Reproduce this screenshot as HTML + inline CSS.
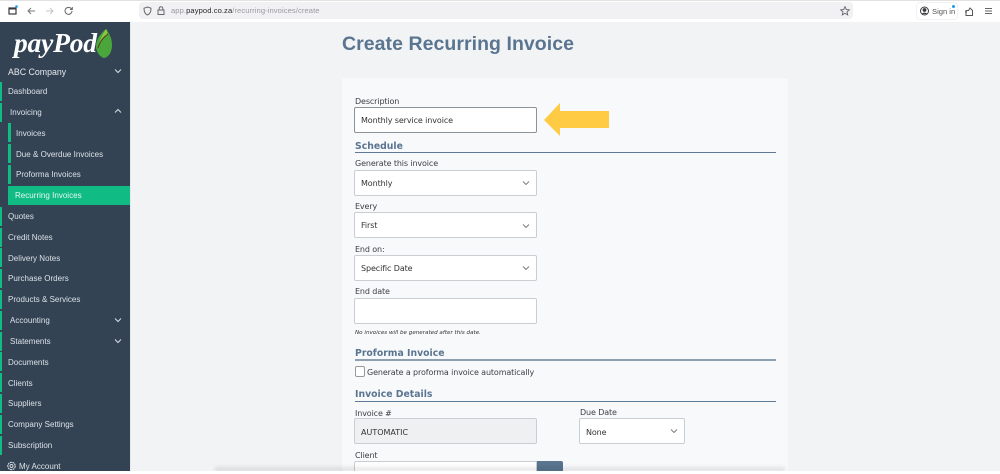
<!DOCTYPE html>
<html><head><meta charset="utf-8"><style>
html,body{margin:0;padding:0;width:1000px;height:474px;overflow:hidden;background:#f2f3f5}
body{font-family:"DejaVu Sans","Liberation Sans",sans-serif;font-size:8px;color:#333;position:relative}
.a{position:absolute;white-space:nowrap}
.s{color:#dbe1e6;line-height:12px;height:12px;font-family:"Liberation Sans",sans-serif;font-size:8px;letter-spacing:.02px;transform:translateY(1px)}
.bar{position:absolute;left:0;width:2px;height:19px;background:#10bc83}
.sb{position:absolute;left:8px;width:2.5px;height:19px;background:#10bc83}
.lab{position:absolute;color:#3a3f44;line-height:12px;white-space:nowrap;letter-spacing:-.12px;transform:translateY(1px)}
.inp{position:absolute;box-sizing:border-box;background:#fff;border:1px solid #c9ced3;border-radius:2px;height:26px;line-height:26px;padding-left:6px;color:#333;width:183px;left:354px;letter-spacing:-.1px}
.h{position:absolute;left:355px;color:#5a7590;font-weight:bold;font-size:9.300px;line-height:14px;white-space:nowrap;transform:translateY(1px)}
.hr{position:absolute;left:355px;width:421px;height:1px;background:#5e7a96}
svg{position:absolute;overflow:visible}
</style></head><body>
<div class="a" style="left:0;top:0;width:1000px;height:22px;background:#fff"></div>
<div class="a" style="left:0;top:0;width:1000px;height:1px;background:#e4e2e0"></div>
<svg style="left:8px;top:5px" width="10" height="10" fill="none" stroke="#3a3a3e" stroke-width="1.2"><rect x="1" y="3" width="7" height="6"/><path d="M1 3.500h7" stroke-width="2"/><circle cx="8.500" cy="1.500" r="1.300" fill="#1a9cf0" stroke="none"/></svg>
<svg style="left:27px;top:6px" width="10" height="10" fill="none" stroke="#77777c" stroke-width="1"><path d="M8 5H1M4 2L1 5l3 3"/></svg>
<svg style="left:45px;top:6px" width="10" height="10" fill="none" stroke="#c5c5c8" stroke-width="1"><path d="M1 5h7M5 2l3 3-3 3"/></svg>
<svg style="left:64px;top:6px" width="10" height="10" fill="none" stroke="#66666a" stroke-width="1"><path d="M8 5a3.500 3.500 0 1 1-1-2.600L8.300 3.500M8.300 1v2.500H6"/></svg>
<div class="a" style="left:139px;top:2px;width:714px;height:17px;background:#f1f1f3;border-radius:4px"></div>
<svg style="left:143px;top:6px" width="10" height="10" fill="none" stroke="#66666a" stroke-width="1"><path d="M4.500 1L8 2.200C8 5.500 7 8 4.500 9 2 8 1 5.500 1 2.200z"/></svg>
<svg style="left:157px;top:6px" width="8" height="10" fill="none" stroke="#66666a" stroke-width="1"><rect x="1" y="4" width="6" height="4.500"/><path d="M2.200 4V2.500a1.800 1.800 0 0 1 3.600 0V4"/></svg>
<div class="a" style="left:171px;top:5px;font-size:7.600px;line-height:12px;color:#9a9aa0;font-family:'Liberation Sans',sans-serif;letter-spacing:.08px">app.<span style="color:#2a2a2e">paypod.co.za</span>/recurring-invoices/create</div>
<svg style="left:840px;top:6px" width="10" height="10" fill="none" stroke="#66666a" stroke-width=".9"><path d="M5 .7l1.300 2.900 3 .3-2.300 2 .7 3L5 7.300 2.300 8.900l.7-3-2.300-2 3-.3z"/></svg>
<div class="a" style="left:916px;top:2px;width:42px;height:18px;background:#fff;border:1px solid #f2f2f4;border-radius:4px;box-sizing:border-box"></div>
<svg style="left:920px;top:6px" width="10" height="10"><circle cx="4.500" cy="5" r="4" fill="none" stroke="#3a3a3e"/><circle cx="4.500" cy="4" r="1.900" fill="#3a3a3e"/><path d="M1.800 8a3 2.500 0 0 1 5.400 0z" fill="#3a3a3e"/></svg>
<div class="a" style="left:932px;top:6px;font-size:7.600px;line-height:12px;color:#55555a;font-family:'Liberation Sans',sans-serif">Sign in</div>
<div class="a" style="left:952px;top:5px;width:3px;height:3px;border-radius:2px;background:#1a9cf0"></div>
<svg style="left:964px;top:6px" width="11" height="11" fill="none" stroke="#55555a" stroke-width="1"><path d="M2 9.500V4.500h2.500L6 2l2.500 2.500V9.500zM1 6h2"/></svg>
<svg style="left:984px;top:7px" width="10" height="8" stroke="#66666a" stroke-width="1"><path d="M1 1.500h7M1 4h7M1 6.500h7"/></svg>

<div class="a" style="left:0;top:22px;width:130px;height:452px;background:#334354"></div>
<div class="a" style="left:14px;top:25px;font-family:'Liberation Serif',serif;font-style:italic;font-weight:bold;font-size:27.500px;line-height:36px;color:#fff;letter-spacing:-.2px">payPod</div>
<svg style="left:95px;top:28px" width="20" height="32"><path d="M11 1C5 6 1 12 1 18c0 6 4 11 8 12C14 29 17 24 17 17 17 10 14 5 11 1z" fill="#4aa63a"/><path d="M11 1C8 6 5 11 3 18c2-6 5-9 8-11 2-1 1-4 0-6z" fill="#8cc83f"/><path d="M3 20C5 13 8 10 13 6" fill="none" stroke="#5a3a20" stroke-width="1"/></svg>
<div class="a s" style="left:8px;top:65px;font-size:8.800px;letter-spacing:0;color:#e6eaee">ABC Company</div>
<svg style="left:114px;top:68px" width="8" height="6" fill="none" stroke="#d8dee3" stroke-width="1"><path d="M1 1.500l3 3 3-3"/></svg>

<div class="bar" style="top:82px"></div><div class="a s" style="left:8px;top:85px">Dashboard</div>
<div class="bar" style="top:103px"></div><div class="a s" style="left:10px;top:106px">Invoicing</div>
<svg style="left:114px;top:108px" width="8" height="6" fill="none" stroke="#d8dee3" stroke-width="1"><path d="M1 4.500l3-3 3 3"/></svg>
<div class="sb" style="top:123px"></div><div class="a s" style="left:16px;top:127px">Invoices</div>
<div class="sb" style="top:144px"></div><div class="a s" style="left:16px;top:148px">Due &amp; Overdue Invoices</div>
<div class="sb" style="top:165px"></div><div class="a s" style="left:16px;top:168px">Proforma Invoices</div>
<div class="a" style="left:8px;top:186px;width:122px;height:19px;background:#10bc83"></div><div class="a s" style="left:15px;top:189px;color:#e8f8f2">Recurring Invoices</div>
<div class="bar" style="top:207px"></div><div class="a s" style="left:8px;top:210px">Quotes</div>
<div class="bar" style="top:228px"></div><div class="a s" style="left:8px;top:231px">Credit Notes</div>
<div class="bar" style="top:248px"></div><div class="a s" style="left:8px;top:252px">Delivery Notes</div>
<div class="bar" style="top:269px"></div><div class="a s" style="left:8px;top:272px">Purchase Orders</div>
<div class="bar" style="top:290px"></div><div class="a s" style="left:8px;top:293px">Products &amp; Services</div>
<div class="bar" style="top:311px"></div><div class="a s" style="left:10px;top:314px">Accounting</div>
<svg style="left:114px;top:317px" width="8" height="6" fill="none" stroke="#d8dee3" stroke-width="1"><path d="M1 1.500l3 3 3-3"/></svg>
<div class="bar" style="top:332px"></div><div class="a s" style="left:10px;top:335px">Statements</div>
<svg style="left:114px;top:338px" width="8" height="6" fill="none" stroke="#d8dee3" stroke-width="1"><path d="M1 1.500l3 3 3-3"/></svg>
<div class="bar" style="top:352px"></div><div class="a s" style="left:8px;top:356px">Documents</div>
<div class="bar" style="top:373px"></div><div class="a s" style="left:8px;top:377px">Clients</div>
<div class="bar" style="top:394px"></div><div class="a s" style="left:8px;top:397px">Suppliers</div>
<div class="bar" style="top:415px"></div><div class="a s" style="left:8px;top:418px">Company Settings</div>
<div class="bar" style="top:436px"></div><div class="a s" style="left:8px;top:439px">Subscription</div>
<svg style="left:7px;top:461px" width="10" height="10" fill="none" stroke="#d8dee3"><circle cx="4.500" cy="5" r="3.700" stroke-dasharray="2 .6" stroke-width="1.100"/><circle cx="4.500" cy="5" r="1.500" stroke-width=".9"/></svg>
<div class="a s" style="left:19px;top:460px">My Account</div>

<div class="a" style="left:342px;top:31px;font-size:19.500px;line-height:26px;font-weight:bold;color:#5a7590;font-family:'Liberation Sans',sans-serif;letter-spacing:.05px">Create Recurring Invoice</div>
<div class="a" style="left:342px;top:78px;width:446px;height:396px;background:#f8f9fb;border-radius:2px"></div>

<div class="lab" style="left:355px;top:95px">Description</div>
<div class="inp" style="top:107px;border-color:#8a929a">Monthly service invoice</div>
<svg style="left:544px;top:103px" width="66" height="32"><path d="M0 17L16 0V8H65V25H16V33z" fill="#ffcb45"/></svg>
<div class="h" style="top:139px">Schedule</div><div class="hr" style="top:152px"></div>
<div class="lab" style="left:355px;top:157px">Generate this invoice</div>
<div class="inp" style="top:170px">Monthly</div>
<div class="lab" style="left:355px;top:200px">Every</div>
<div class="inp" style="top:212px">First</div>
<div class="lab" style="left:355px;top:243px">End on:</div>
<div class="inp" style="top:255px">Specific Date</div>
<svg style="left:522px;top:180px" width="8" height="6" fill="none" stroke="#777" stroke-width=".9"><path d="M1 1.500l3 3 3-3"/></svg>
<svg style="left:522px;top:223px" width="8" height="6" fill="none" stroke="#777" stroke-width=".9"><path d="M1 1.500l3 3 3-3"/></svg>
<svg style="left:522px;top:265px" width="8" height="6" fill="none" stroke="#777" stroke-width=".9"><path d="M1 1.500l3 3 3-3"/></svg>
<div class="lab" style="left:355px;top:285px">End date</div>
<div class="inp" style="top:298px"></div>
<div class="lab" style="left:355px;top:326px;font-size:5.600px;font-style:italic;color:#333;letter-spacing:0">No invoices will be generated after this date.</div>
<div class="h" style="top:346px">Proforma Invoice</div><div class="hr" style="top:359px;height:1.500px;background:#8e9fb0"></div>
<div class="a" style="left:355px;top:366px;width:10px;height:11px;box-sizing:border-box;background:#fff;border:1px solid #999;border-radius:2px"></div>
<div class="lab" style="left:367px;top:366px">Generate a proforma invoice automatically</div>
<div class="h" style="top:387px">Invoice Details</div><div class="hr" style="top:401px"></div>
<div class="lab" style="left:355px;top:407px">Invoice #</div>
<div class="inp" style="top:418px;background:#eff0f1;letter-spacing:0;line-height:27px">AUTOMATIC</div>
<div class="lab" style="left:580px;top:406px">Due Date</div>
<div class="inp" style="top:418px;left:579px;width:106px;line-height:27px">None</div>
<svg style="left:670px;top:428px" width="8" height="6" fill="none" stroke="#777" stroke-width=".9"><path d="M1 1.500l3 3 3-3"/></svg>
<div class="lab" style="left:355px;top:449px">Client</div>
<div class="inp" style="top:461px;height:13px;border-bottom:0;border-radius:2px 0 0 0"></div>
<div class="a" style="left:537px;top:461px;width:26px;height:13px;background:#5a7590;border-radius:0 2px 0 0"></div>
<div class="a" style="left:215px;top:465px;width:570px;height:6px;background:linear-gradient(#0000,#00000022);filter:blur(1.500px)"></div>
<div class="a" style="left:130px;top:22px;width:1px;height:450px;background:#e6e8ea"></div>
<div class="a" style="left:0;top:471px;width:1000px;height:3px;background:#fff"></div>
</body></html>
